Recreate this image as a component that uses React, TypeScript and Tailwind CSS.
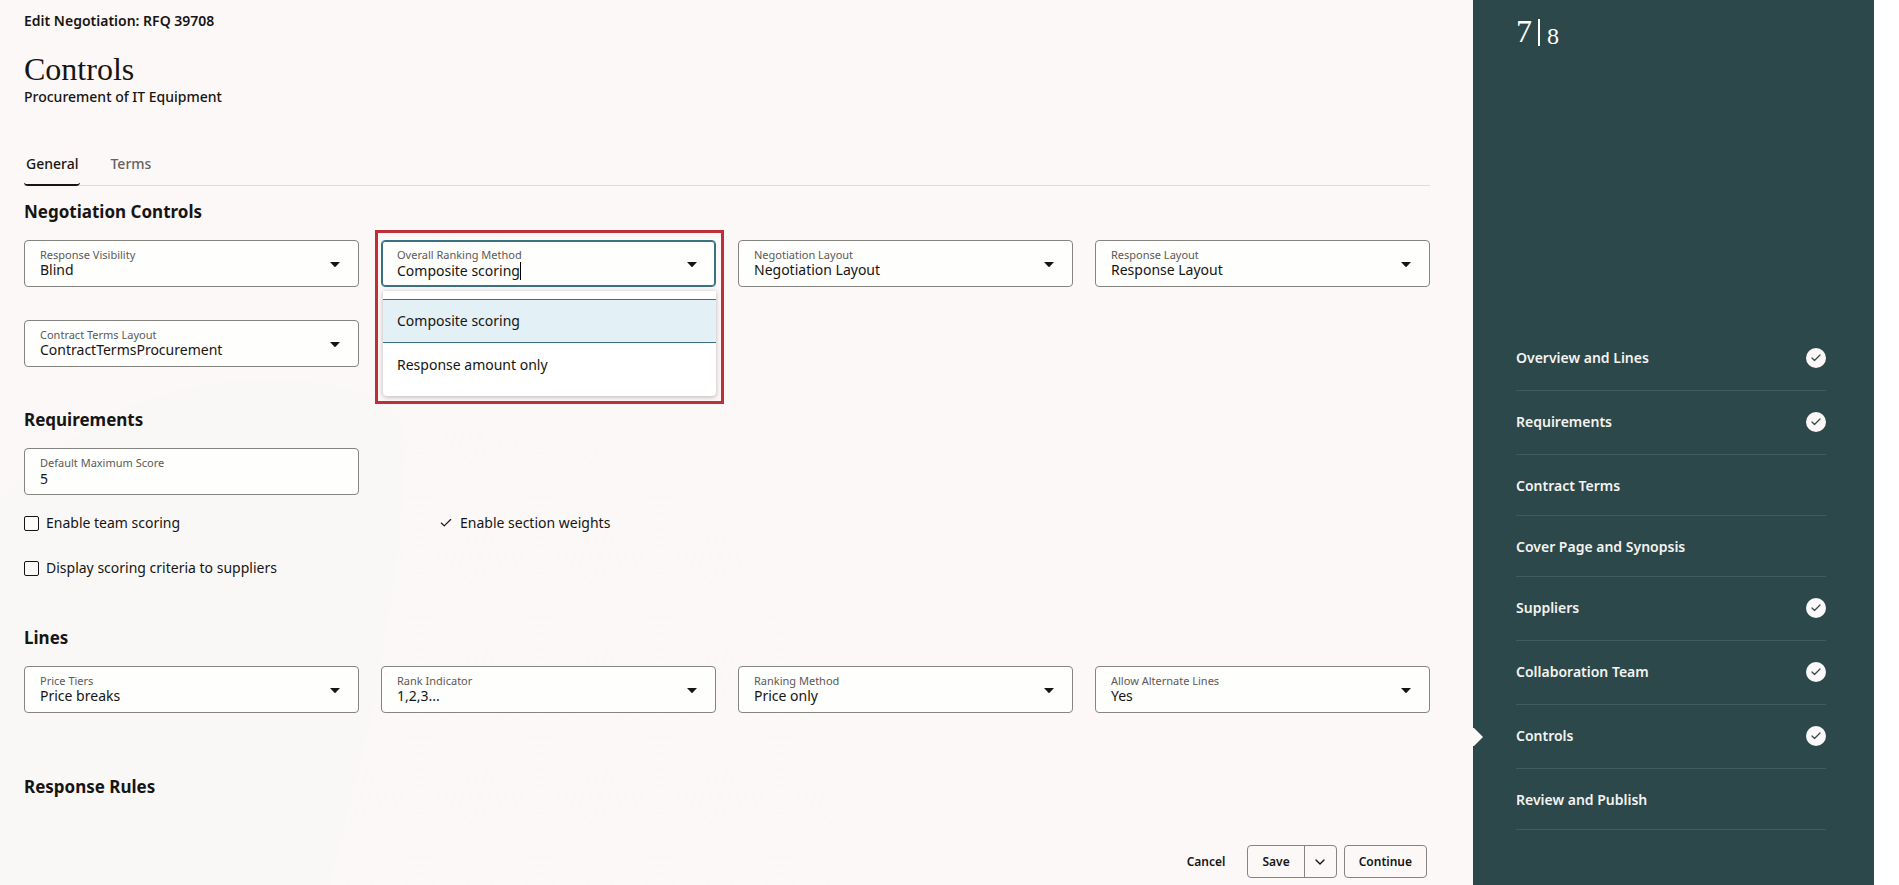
import { useId, useState } from "react";
import { Check, ChevronDown } from "lucide-react";

interface Step {
  name: string;
  done: boolean;
}

const steps: Step[] = [
  { name: "Overview and Lines", done: true },
  { name: "Requirements", done: true },
  { name: "Contract Terms", done: false },
  { name: "Cover Page and Synopsis", done: false },
  { name: "Suppliers", done: true },
  { name: "Collaboration Team", done: true },
  { name: "Controls", done: true },
  { name: "Review and Publish", done: false },
];

const currentStep = "Controls";

const rankingOptions = ["Composite scoring", "Response amount only"];

const DropArrow = () => (
  <svg
    className="pointer-events-none absolute right-[18px] top-1/2 -mt-[2px] h-[5px] w-[10px]"
    viewBox="0 0 10 5"
    aria-hidden="true"
  >
    <path d="M0 0h10L5.8 4.6a1.1 1.1 0 0 1-1.6 0z" fill="#161513" />
  </svg>
);

const labelClass =
  "pointer-events-none absolute left-[15px] top-[6px] text-[11px] leading-4 text-[#5b5957]";

const SelectField = ({ label, value }: { label: string; value: string }) => {
  const id = useId();
  return (
    <div className="relative h-[47px] rounded border border-[#858481] bg-[#fefefd]">
      <label htmlFor={id} className={labelClass}>
        {label}
      </label>
      <select
        id={id}
        defaultValue={value}
        className="h-full w-full appearance-none rounded pl-[15px] pr-10 pt-[13px] text-sm outline-none"
      >
        <option value={value}>{value}</option>
      </select>
      <DropArrow />
    </div>
  );
};

const TextField = ({ label, value }: { label: string; value: string }) => {
  const id = useId();
  return (
    <div className="relative h-[47px] rounded border border-[#858481] bg-[#fefefd]">
      <label htmlFor={id} className={labelClass}>
        {label}
      </label>
      <input
        id={id}
        type="text"
        defaultValue={value}
        className="h-full w-full rounded px-[15px] pt-[13px] text-sm outline-none"
      />
    </div>
  );
};

const RankingField = () => {
  const [value, setValue] = useState("Composite scoring");

  return (
    <div className="relative z-10 h-[47px]">
      <div className="relative h-full rounded border border-[#3b7185] bg-[#fefefd] ring-1 ring-inset ring-[#3b7185]">
        <label htmlFor="ranking" className={labelClass}>
          Overall Ranking Method
        </label>
        <input
          id="ranking"
          type="text"
          role="combobox"
          aria-expanded="true"
          aria-controls="ranking-list"
          value={value}
          onChange={(e) => setValue(e.target.value)}
          className="h-full w-full rounded pl-[15px] pr-10 pt-[13px] text-sm caret-transparent outline-none"
        />
        {/* text cursor, sits right after the typed value */}
        <div
          className="pointer-events-none absolute bottom-[6px] left-[15px] flex h-[18px] text-sm"
          aria-hidden="true"
        >
          <span className="invisible whitespace-pre">{value}</span>
          <span className="w-px bg-black" />
        </div>
        <DropArrow />
      </div>
      <ul
        id="ranking-list"
        role="listbox"
        className="absolute left-[2px] right-0 top-[51px] rounded-b bg-white pb-[9px] pt-2 text-sm shadow-[0_1px_5px_rgba(0,0,0,0.28)]"
      >
        {rankingOptions.map((option) => (
          <li
            key={option}
            role="option"
            aria-selected={option === value}
            onClick={() => setValue(option)}
            className="h-11 cursor-pointer border-y border-transparent px-[14px] leading-[42px] aria-selected:border-[#3b7185] aria-selected:bg-[#e3f0f6]"
          >
            {option}
          </li>
        ))}
      </ul>
      <div className="pointer-events-none absolute -left-[6px] -right-2 -top-[10px] h-[174px] border-3 border-[#bf2f35]" />
    </div>
  );
};

const CheckField = ({ label }: { label: string }) => (
  <label className="flex h-5 items-center gap-[7px] text-sm">
    <input
      type="checkbox"
      className="h-[15px] w-[15px] shrink-0 appearance-none rounded-[2px] border border-[#161513] bg-[#fdfcfb]"
    />
    {label}
  </label>
);

const SectionTitle = ({ children }: { children: string }) => (
  <h2 className="text-[17px] font-bold leading-6">{children}</h2>
);

// faint wavy texture behind the form
const Backdrop = () => (
  <svg
    className="pointer-events-none absolute bottom-0 left-0 h-[510px] w-[840px]"
    viewBox="0 0 840 510"
    aria-hidden="true"
  >
    <defs>
      <pattern id="waves" width="120" height="120" patternUnits="userSpaceOnUse">
        <g fill="none" stroke="#f9f8f6" strokeWidth="2">
          {[10, 18, 26, 34, 42, 50, 58].map((r) => (
            <circle key={r} cx="60" cy="60" r={r} />
          ))}
        </g>
      </pattern>
    </defs>
    <path d="M340 510 400 60Q620 40 720 150T840 510z" fill="url(#waves)" />
    <path d="M0 125Q110 5 265 5T405 85Q400 260 330 510H0z" fill="#faf8f7" />
  </svg>
);

const StepList = () => (
  <ol className="mt-[284px]">
    {steps.map((step) => (
      <li
        key={step.name}
        className="relative flex items-start justify-between border-b border-[#405c5e] pb-[17px] pt-[19px]"
      >
        {step.name === currentStep && (
          <svg
            className="absolute -left-[43px] top-[23px] h-[18px] w-[10px]"
            viewBox="0 0 10 18"
            aria-hidden="true"
          >
            <path d="M0 0h1l9 9-9 9H0z" fill="#fcf9f8" />
          </svg>
        )}
        <a
          href="#"
          aria-current={step.name === currentStep ? "step" : undefined}
          className="text-sm font-semibold leading-6 text-[#f4f3f1]"
        >
          {step.name}
        </a>
        {step.done && (
          <span className="flex h-[27px] items-start pt-[2px]">
            <span className="flex h-5 w-5 items-center justify-center rounded-full bg-[#fbf9f8]">
              <Check className="h-3 w-3 text-[#3a4647]" strokeWidth={2.5} />
            </span>
          </span>
        )}
      </li>
    ))}
  </ol>
);

export default function App() {
  return (
    <div className="flex min-h-screen bg-white pr-[25px] font-['Noto_Sans',sans-serif] text-[#161513]">
      <main className="relative isolate flex min-w-0 flex-1 flex-col bg-[#fcf8f7] pl-6 pr-[43px]">
        <div className="absolute inset-0 -z-10 overflow-hidden">
          <Backdrop />
        </div>

        <header className="pt-[10px]">
          <p className="text-sm font-semibold leading-[22px]">Edit Negotiation: RFQ 39708</p>
          <h1 className="mt-[19px] font-['Liberation_Serif',serif] text-[32px] leading-9">Controls</h1>
          <p className="text-sm font-medium leading-5">Procurement of IT Equipment</p>
        </header>

        <div role="tablist" className="mt-9 flex gap-[30px] border-b border-[#dedbd9] text-sm font-medium">
          <button
            role="tab"
            aria-selected="true"
            className="-mb-px h-[43px] rounded-sm border-b-2 border-[#161513] px-[2px]"
          >
            General
          </button>
          <button role="tab" aria-selected="false" className="-mb-px h-[43px] pb-[2px] text-[#65625f]">
            Terms
          </button>
        </div>

        <section className="mt-[14px]">
          <SectionTitle>Negotiation Controls</SectionTitle>
          <div className="mt-4 grid grid-cols-4 gap-x-[22px] gap-y-[33px]">
            <SelectField label="Response Visibility" value="Blind" />
            <RankingField />
            <SelectField label="Negotiation Layout" value="Negotiation Layout" />
            <SelectField label="Response Layout" value="Response Layout" />
            <SelectField label="Contract Terms Layout" value="ContractTermsProcurement" />
          </div>
        </section>

        <section className="mt-[41px]">
          <SectionTitle>Requirements</SectionTitle>
          <div className="mt-4 grid grid-cols-4 gap-x-[22px]">
            <TextField label="Default Maximum Score" value="5" />
          </div>
          <div className="mt-[18px] grid grid-cols-[415px_1fr] gap-y-[25px]">
            <CheckField label="Enable team scoring" />
            <label className="relative flex h-5 items-center gap-[7px] text-sm">
              <input type="checkbox" defaultChecked className="h-[14px] w-[14px] appearance-none" />
              <Check className="pointer-events-none absolute left-0 h-[14px] w-[14px]" strokeWidth={2} />
              Enable section weights
            </label>
            <CheckField label="Display scoring criteria to suppliers" />
          </div>
        </section>

        <section className="mt-12">
          <SectionTitle>Lines</SectionTitle>
          <div className="mt-4 grid grid-cols-4 gap-x-[22px]">
            <SelectField label="Price Tiers" value="Price breaks" />
            <SelectField label="Rank Indicator" value="1,2,3..." />
            <SelectField label="Ranking Method" value="Price only" />
            <SelectField label="Allow Alternate Lines" value="Yes" />
          </div>
        </section>

        <section className="mt-[62px]">
          <SectionTitle>Response Rules</SectionTitle>
        </section>

        <footer className="mt-auto flex items-center justify-end pb-[7px] pr-[3px] pt-5 text-xs font-semibold">
          <button className="mr-[22px] h-[33px]">Cancel</button>
          <div className="mr-[7px] flex h-[33px] rounded border border-[#858481]">
            <button className="px-[14px]">Save</button>
            <button
              aria-label="More save options"
              className="flex w-8 items-center justify-center border-l border-[#858481]"
            >
              <ChevronDown className="h-4 w-4" strokeWidth={2} />
            </button>
          </div>
          <button className="h-[33px] rounded border border-[#858481] px-[14px]">Continue</button>
        </footer>
      </main>

      <aside className="w-[401px] shrink-0 bg-[#2c484a] pl-[43px] pr-12">
        <div className="flex h-[46px] items-end font-['Liberation_Serif',serif] text-white">
          <span className="h-[26px] text-[32px] leading-[22px]">7</span>
          <span className="ml-[6px] h-[27px] w-[2px] bg-white" />
          <span className="ml-[7px] h-[22px] text-2xl leading-6">8</span>
        </div>
        <div className="-mt-[3px]">
          <StepList />
        </div>
      </aside>
    </div>
  );
}
